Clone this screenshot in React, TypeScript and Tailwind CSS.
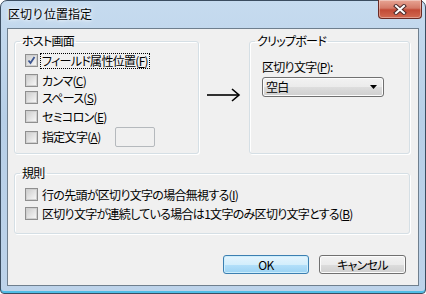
import type { ReactNode } from 'react';

const jp = "font-['Noto_Sans_CJK_JP','Noto_Sans',sans-serif] [font-feature-settings:'palt']";

function Box({ checked = false }: { checked?: boolean }) {
  return (
    <span className="flex h-[13px] w-[13px] shrink-0 items-center justify-center border border-[#8f8f8f] bg-[#f4f4f4]">
      <span className="flex h-[11px] w-[11px] items-center justify-center border border-[#d0d0d0] bg-[linear-gradient(135deg,#cfcfcf,#f6f6f6)]">
        {checked && (
          <svg width="9" height="9" viewBox="0 0 9 9">
            <path d="M1.5 4.5 L3.5 7 L7.5 1" fill="none" stroke="#3d5691" strokeWidth="1.8" />
          </svg>
        )}
      </span>
    </span>
  );
}

function Check({
  children,
  checked,
  focused,
  className = '',
}: {
  children: ReactNode;
  checked?: boolean;
  focused?: boolean;
  className?: string;
}) {
  return (
    <div className={`flex h-[13px] items-center gap-[2px] ${className}`}>
      <Box checked={checked} />
      <span
        className={`whitespace-nowrap px-[1px] leading-[14px] ${
          focused ? 'border border-dotted border-black' : 'border border-transparent'
        }`}
      >
        {children}
      </span>
    </div>
  );
}

function Group({ title, className = '', children }: { title: string; className?: string; children: ReactNode }) {
  return (
    <fieldset className={`rounded-[3px] border border-[#d5dfe5] p-0 shadow-[inset_1px_1px_0_#fff,1px_1px_0_#fff] ${className}`}>
      <legend className="ml-[5px] px-[2px] leading-[14px]">{title}</legend>
      {children}
    </fieldset>
  );
}

export default function App() {
  return (
    <div className={`h-[294px] w-[426px] overflow-hidden text-[12px] tracking-[-0.7px] text-black ${jp}`}>
      <div className="flex h-full flex-col rounded-t-[7px] rounded-b-[4px] border border-[#3b4d60] bg-[linear-gradient(180deg,#c6dbef_0%,#b7cfe7_40%,#bdd3ea_100%)] px-[6px] pb-[7px] shadow-[inset_0_-2px_0_#4fbde6]">
        <div className="flex h-[27px] items-start justify-between">
          <span className="pl-[1px] pt-[5px] text-[12px] leading-[16px] tracking-normal [font-feature-settings:normal] [text-shadow:0_0_6px_#fff,0_0_3px_#fff]">
            区切り位置指定
          </span>
          <button className="-mr-[3px] -mt-[1px] flex h-[19px] w-[44px] items-center justify-center rounded-b-[4px] border border-t-0 border-[#6b2a24] bg-[linear-gradient(180deg,#e8a594_0%,#d47a68_45%,#c24a36_55%,#d26a52_100%)] shadow-[inset_0_0_0_1px_rgba(255,255,255,0.35)]">
            <svg width="14" height="11" viewBox="0 0 14 11">
              <path d="M3 2 L11 9 M11 2 L3 9" stroke="#4b2a2a" strokeWidth="4" strokeLinecap="square" />
              <path d="M3 2 L11 9 M11 2 L3 9" stroke="#fff" strokeWidth="2" strokeLinecap="square" />
            </svg>
          </button>
        </div>

        <div className="flex flex-1 flex-col border border-[#6f7f8e] bg-[#f0f0f0] pl-[6px] pt-[5px]">
          <div className="flex h-[120px] items-stretch">
            <Group title="ホスト画面" className="w-[185px]">
              <div className="flex flex-col pl-[10px] pt-[6px]">
                <Check checked focused>
                  フィールド属性位置(<u>F</u>)
                </Check>
                <Check className="mt-[7px]">
                  カンマ(<u>C</u>)
                </Check>
                <Check className="mt-[4px]">
                  スペース(<u>S</u>)
                </Check>
                <Check className="mt-[6px]">
                  セミコロン(<u>E</u>)
                </Check>
                <div className="mt-[4px] flex items-center">
                  <Check>
                    指定文字(<u>A</u>)
                  </Check>
                  <span className="ml-[12px] h-[20px] w-[40px] rounded-[2px] border border-[#b5b9bd] bg-[#f0f0f0]" />
                </div>
              </div>
            </Group>

            <div className="ml-[8px] flex w-[34px] items-start pt-[54px]">
              <svg width="34" height="14" viewBox="0 0 34 14">
                <path d="M0 7 H32" stroke="#000" strokeWidth="1.6" />
                <path d="M25 1 L32 7 L25 13" fill="none" stroke="#000" strokeWidth="1.6" />
              </svg>
            </div>

            <Group title="クリップボード" className="ml-[8px] w-[161px]">
              <div className="flex flex-col pl-[12px] pt-[12px]">
                <span className="leading-[14px]">
                  区切り文字(<u>P</u>):
                </span>
                <div className="mt-[3px] flex h-[20px] w-[122px] items-center justify-between rounded-[3px] border border-[#707070] bg-[linear-gradient(180deg,#f2f2f2_0%,#ebebeb_50%,#dddddd_51%,#cfcfcf_100%)] pl-[3px] pr-[6px] shadow-[inset_0_0_0_1px_#fcfcfc]">
                  <span className="leading-[14px]">空白</span>
                  <svg width="7" height="4" viewBox="0 0 7 4">
                    <path d="M0 0 H7 L3.5 4 Z" fill="#000" />
                  </svg>
                </div>
              </div>
            </Group>
          </div>

          <Group title="規則" className="mt-[12px] h-[68px] w-[396px]">
            <div className="flex flex-col pl-[10px] pt-[8px]">
              <Check>
                行の先頭が区切り文字の場合無視する(<u>I</u>)
              </Check>
              <Check className="mt-[6px]">
                区切り文字が連続している場合は1文字のみ区切り文字とする(<u>B</u>)
              </Check>
            </div>
          </Group>

          <div className="mt-[21px] flex justify-end gap-[10px] pr-[12px]">
            <button className="flex h-[19px] w-[86px] items-center justify-center rounded-[3px] border border-[#3c7fb1] bg-[linear-gradient(180deg,#e5f4fd_0%,#d3eefc_50%,#b4e0fa_51%,#9bd2f3_100%)] leading-[14px] shadow-[inset_0_0_0_1px_#cdeefc]">
              OK
            </button>
            <button className="flex h-[19px] w-[87px] items-center justify-center rounded-[3px] border border-[#707070] bg-[linear-gradient(180deg,#f2f2f2_0%,#ebebeb_50%,#dddddd_51%,#cfcfcf_100%)] leading-[14px] shadow-[inset_0_0_0_1px_#fcfcfc]">
              キャンセル
            </button>
          </div>
        </div>
      </div>
    </div>
  );
}
